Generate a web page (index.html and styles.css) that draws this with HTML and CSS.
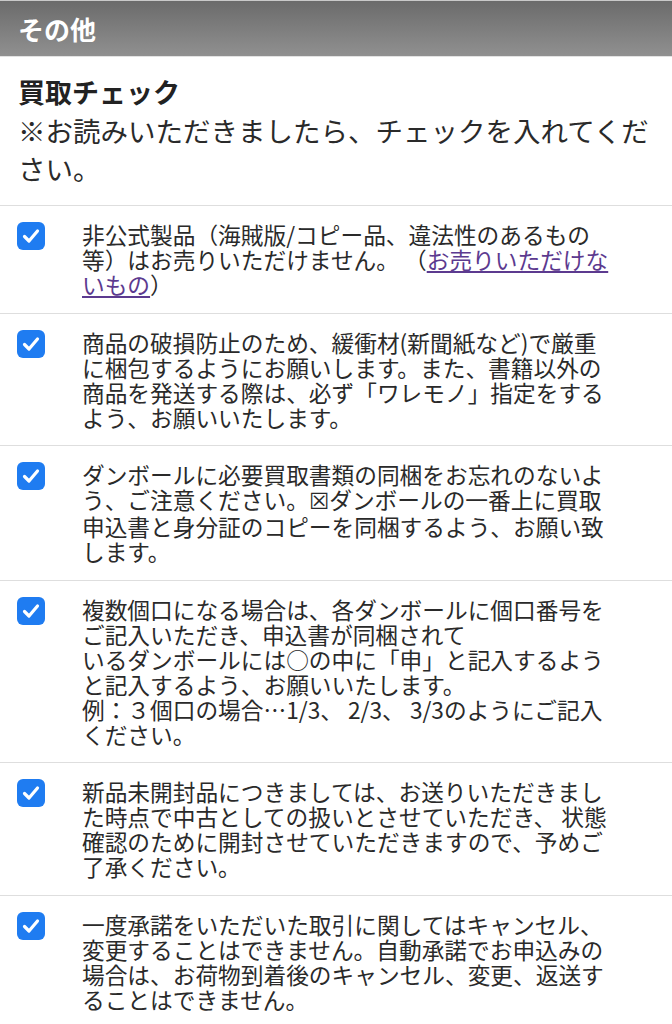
FILE: index.html
```html
<!DOCTYPE html>
<html lang="ja">
<head>
    <meta charset="UTF-8">
    <meta name="viewport" content="width=device-width, initial-scale=1.0">
    <title>その他 - 買取チェック</title>
    <link rel="stylesheet" href="styles.css">
</head>
<body>
    <div class="section-title">その他</div>

    <div class="intro">
        <h2>買取チェック</h2>
        <p>※お読みいただきましたら、チェックを入れてください。</p>
    </div>

    <ul class="check-list">
        <li class="check-item">
            <span class="check-box"><svg viewBox="0 0 28 28"><rect width="28" height="28" rx="6"/><path d="M7.5 14.5 L12 19 L20.5 9"/></svg></span>
            <p class="check-text">非公式製品（海賊版/コピー品、違法性のあるもの等）はお売りいただけません。 （<a href="#">お売りいただけないもの</a>）</p>
        </li>
        <li class="check-item">
            <span class="check-box"><svg viewBox="0 0 28 28"><rect width="28" height="28" rx="6"/><path d="M7.5 14.5 L12 19 L20.5 9"/></svg></span>
            <p class="check-text">商品の破損防止のため、緩衝材(新聞紙など)で厳重に梱包するようにお願いします。また、書籍以外の商品を発送する際は、必ず「ワレモノ」指定をするよう、お願いいたします。</p>
        </li>
        <li class="check-item">
            <span class="check-box"><svg viewBox="0 0 28 28"><rect width="28" height="28" rx="6"/><path d="M7.5 14.5 L12 19 L20.5 9"/></svg></span>
            <p class="check-text">ダンボールに必要買取書類の同梱をお忘れのないよう、ご注意ください。<span class="mark">☒</span>ダンボールの一番上に買取申込書と身分証のコピーを同梱するよう、お願い致します。</p>
        </li>
        <li class="check-item">
            <span class="check-box"><svg viewBox="0 0 28 28"><rect width="28" height="28" rx="6"/><path d="M7.5 14.5 L12 19 L20.5 9"/></svg></span>
            <p class="check-text">複数個口になる場合は、各ダンボールに個口番号をご記入いただき、申込書が同梱されて<br>いるダンボールには○の中に「申」と記入するようと記入するよう、お願いいたします。<br>例：３個口の場合…1/3、 2/3、 3/3のようにご記入ください。</p>
        </li>
        <li class="check-item">
            <span class="check-box"><svg viewBox="0 0 28 28"><rect width="28" height="28" rx="6"/><path d="M7.5 14.5 L12 19 L20.5 9"/></svg></span>
            <p class="check-text">新品未開封品につきましては、お送りいただきました時点で中古としての扱いとさせていただき、 状態確認のために開封させていただきますので、予めご了承ください。</p>
        </li>
        <li class="check-item">
            <span class="check-box"><svg viewBox="0 0 28 28"><rect width="28" height="28" rx="6"/><path d="M7.5 14.5 L12 19 L20.5 9"/></svg></span>
            <p class="check-text">一度承諾をいただいた取引に関してはキャンセル、変更することはできません。自動承諾でお申込みの場合は、お荷物到着後のキャンセル、変更、返送することはできません。</p>
        </li>
    </ul>
</body>
</html>
```

FILE: styles.css
```css
body {
    margin: 0;
    font-family: "Noto Sans CJK JP", "DejaVu Sans", sans-serif;
    color: #222;
    background: #fff;
}
.section-title {
    height: 55px;
    line-height: 55px;
    padding-left: 18px;
    border-top: 1px solid #c9c9c9;
    border-bottom: 1px solid #e2e2e2;
    background: linear-gradient(#6b6b6b, #909090);
    color: #fff;
    font-size: 26px;
    font-weight: bold;
}
.intro {
    padding: 16px 14px 18px 18px;
}
.intro h2 {
    margin: 0;
    font-size: 27px;
    line-height: 38px;
    font-weight: bold;
}
.intro p {
    margin: 0;
    font-size: 27.5px;
    line-height: 38px;
    color: #2a2a2a;
}
.check-list {
    list-style: none;
    margin: 0;
    padding: 0;
}
.check-item {
    display: flex;
    align-items: flex-start;
    padding: 16px 56px 15.5px 17px;
    border-top: 1px solid #dedede;
}
.check-box {
    flex: 0 0 28px;
    width: 28px;
    height: 28px;
    margin-right: 37px;
}
.check-box svg {
    display: block;
    width: 28px;
    height: 28px;
}
.check-box rect {
    fill: #1f7cf1;
}
.check-box path {
    fill: none;
    stroke: #fff;
    stroke-width: 3.2;
    stroke-linecap: round;
    stroke-linejoin: round;
}
.check-text {
    flex: 1;
    margin: 0;
    font-size: 22.7px;
    line-height: 25px;
    color: #2a2a2a;
}
.check-text a {
    color: #5c3a8f;
    text-decoration: underline;
}
.mark {
    font-family: "DejaVu Sans", sans-serif;
}
```
